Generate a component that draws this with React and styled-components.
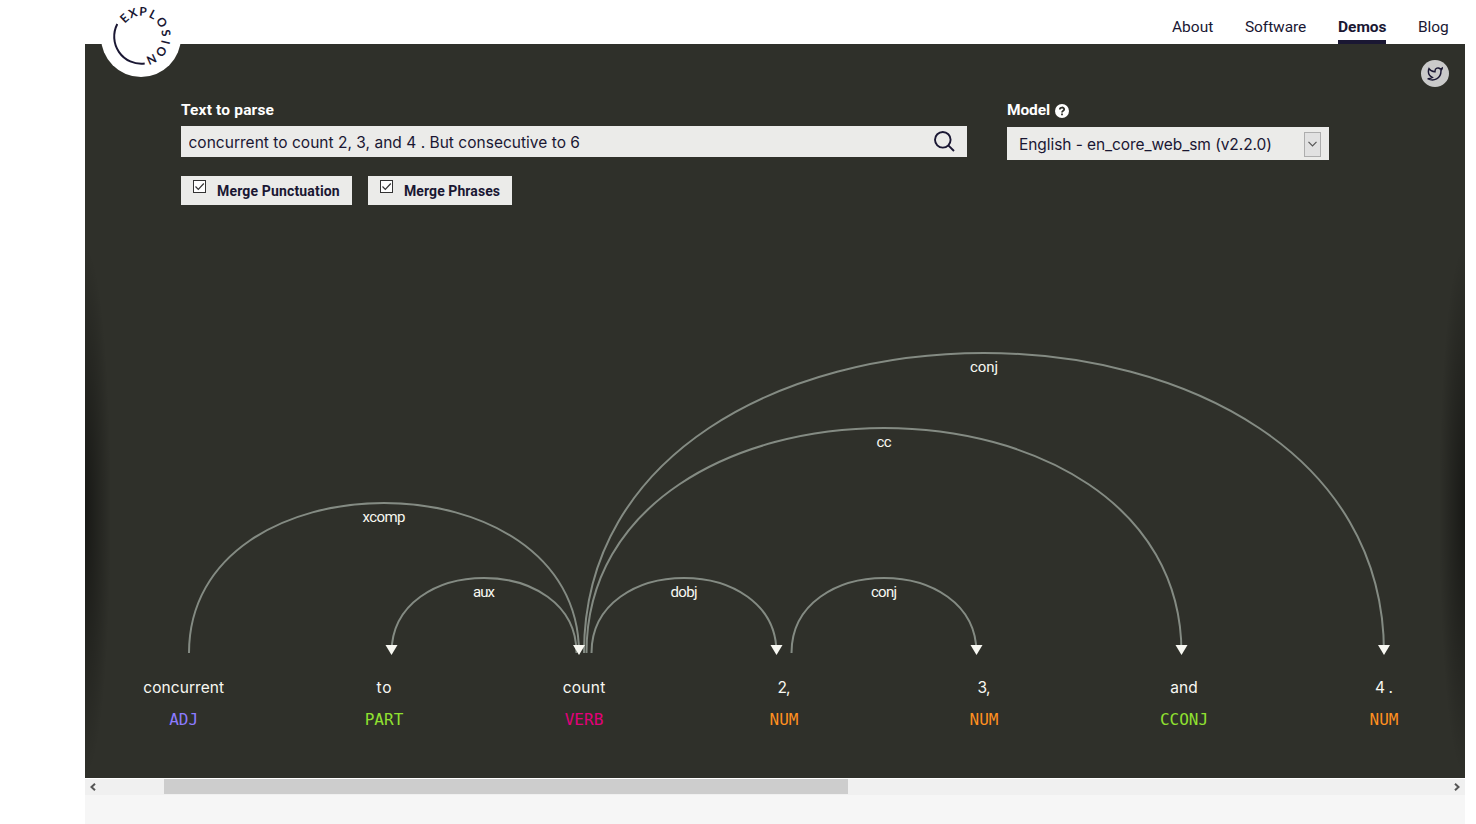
import { useState } from 'react'
import styled, { createGlobalStyle } from 'styled-components'

const GlobalStyle = createGlobalStyle`
	* {
		box-sizing: border-box;
	}
	body {
		margin: 0;
		background: #fff;
		color: #1a1733;
		font-family: Roboto, 'Liberation Sans', sans-serif;
		overflow: hidden;
	}
`

const Page = styled.div`
	width: 1380px;
	height: 824px;
	margin-left: 85px;
	background: #f6f6f6;
`

const Header = styled.header`
	position: relative;
	z-index: 1;
	display: flex;
	justify-content: flex-end;
	height: 44px;
	padding-right: 16px;
	background: #fff;
`

const Logo = styled.a`
	position: absolute;
	left: 16px;
	top: -3px;
	width: 80px;
	height: 80px;
	border-radius: 50%;
	background: #fff;
`

const Nav = styled.nav`
	display: flex;
	gap: 32px;
`

const NavLink = styled.a`
	width: ${p => p.$width}px;
	padding-top: 17px;
	font-size: 15.5px;
	line-height: 21px;
	white-space: nowrap;
	letter-spacing: ${p => p.$spacing || 0}px;
	font-weight: ${p => (p.$active ? 700 : 400)};
	border-bottom: ${p => (p.$active ? '4px solid #1a1733' : '0')};
`

const Stage = styled.main`
	position: relative;
	height: 734px;
	background: #2f302a;
`

const Twitter = styled.a`
	position: absolute;
	right: 16px;
	top: 16px;
	display: flex;
	align-items: center;
	justify-content: center;
	width: 28px;
	height: 27px;
	border-radius: 50%;
	background: #cacaca;
`

const Controls = styled.section`
	display: flex;
	gap: 40px;
	height: 200px;
	padding: 56px 0 0 96px;
`

const Field = styled.div`
	width: ${p => p.$width}px;
`

const Label = styled.label`
	display: flex;
	align-items: center;
	gap: 5px;
	height: 20px;
	color: #fff;
	font-size: 15.5px;
	font-weight: 700;
	letter-spacing: ${p => p.$spacing || 0}px;

	svg {
		margin-top: 2px;
	}
`

const SearchBox = styled.div`
	display: flex;
	align-items: center;
	justify-content: space-between;
	height: 31px;
	margin-top: 6px;
	padding: 0 12px 0 7.5px;
	background: #ebebe9;

	svg {
		margin-top: -1px;
	}
`

const Input = styled.input`
	flex: 1;
	padding: 2px 0 0;
	border: 0;
	outline: 0;
	background: transparent;
	color: #1a1733;
	font: 15.5px Inter, sans-serif;
	letter-spacing: 0.02px;
`

const Select = styled.div`
	display: flex;
	align-items: center;
	justify-content: space-between;
	height: 33px;
	margin-top: 7px;
	padding: 1px 8px 0 12px;
	background: #ebebe9;
	font: 15.5px Inter, sans-serif;
	letter-spacing: -0.07px;
	white-space: nowrap;
`

const SelectButton = styled.span`
	display: flex;
	align-items: center;
	justify-content: center;
	width: 17px;
	height: 25px;
	border: 1px solid #adadad;
	background: #e1e1e1;
`

const Options = styled.div`
	display: flex;
	gap: 16px;
	margin-top: 19px;
`

const Option = styled.label`
	display: flex;
	gap: 11px;
	width: ${p => p.$width}px;
	height: 29px;
	padding: 4px 0 0 12px;
	background: #ebebe9;
	font-size: 14px;
	font-weight: 700;
	line-height: 22px;
	letter-spacing: ${p => p.$spacing}px;
	white-space: nowrap;
`

const CheckBox = styled.span`
	display: flex;
	width: 13px;
	height: 13px;
	border: 1px solid #333;
	background: #fff;
`

const Scroller = styled.div`
	height: 534px;
	background:
		radial-gradient(farthest-side at 0 50%, rgba(0, 0, 0, 0.5), transparent) 0 0 / 26px 100% no-repeat,
		radial-gradient(farthest-side at 100% 50%, rgba(0, 0, 0, 0.5), transparent) 100% 0 / 26px 100% no-repeat;
`

const Scrollbar = styled.div`
	display: flex;
	align-items: center;
	justify-content: space-between;
	height: 17px;
	padding: 0 5px 1px;
	border-top: 1px solid #fff;
	background: #f0f0f0;
`

const Thumb = styled.div`
	width: 684px;
	height: 15px;
	margin: 0 auto 0 68px;
	background: #cdcdcd;
`

const words = [
	{ text: 'concurrent', tag: 'ADJ', x: 98.7, color: '#8c7bff', width: 81 },
	{ text: 'to', tag: 'PART', x: 299, color: '#90e030', width: 15 },
	{ text: 'count', tag: 'VERB', x: 499, color: '#e2007a', width: 42.5 },
	{ text: '2,', tag: 'NUM', x: 699, color: '#ff8f1f', width: 13 },
	{ text: '3,', tag: 'NUM', x: 899, color: '#ff8f1f', width: 13 },
	{ text: 'and', tag: 'CCONJ', x: 1099, color: '#90e030', width: 27.5 },
	{ text: '4 .', tag: 'NUM', x: 1299, color: '#ff8f1f', width: 18 },
]

const arcs = [
	{ label: 'xcomp', from: 104, to: 494, level: 2, arrow: 494, width: 43 },
	{ label: 'aux', from: 306.5, to: 491.5, level: 1, arrow: 306.5, width: 22 },
	{ label: 'dobj', from: 506.5, to: 691.5, level: 1, arrow: 691.5, width: 27 },
	{ label: 'conj', from: 706.5, to: 891.5, level: 1, arrow: 891.5, width: 26 },
	{ label: 'cc', from: 501.5, to: 1096.5, level: 3, arrow: 1096.5, width: 15 },
	{ label: 'conj', from: 499, to: 1299, level: 4, arrow: 1299, width: 28 },
]

// distance from the top of the tree to the feet of the arcs
const BASE = 409

function Tree() {
	return (
		<svg width='1380' height='534' fontFamily='Inter, sans-serif' textAnchor='middle'>
			{arcs.map((arc, i) => {
				const top = BASE - arc.level * 100
				return (
					<path
						key={i}
						d={`M${arc.from},${BASE} C${arc.from},${top} ${arc.to},${top} ${arc.to},${BASE}`}
						fill='none'
						stroke='#848b83'
						strokeWidth='2'
					/>
				)
			})}
			{arcs.map((arc, i) => (
				<g key={i} fill='#f8f8f2'>
					<path d={`M${arc.arrow},${BASE + 2} l-6,-10 h12 z`} />
					<text
						x={Math.round((arc.from + arc.to) / 200) * 100 - 1}
						y={BASE - arc.level * 75 + 19}
						textLength={arc.width}
						fontFamily='Roboto, sans-serif'
						fontSize='15'
					>
						{arc.label}
					</text>
				</g>
			))}
			{words.map(word => (
				<g key={word.x}>
					<text x={word.x} y='449' textLength={word.width} fontSize='15.5' fill='#f8f8f2'>
						{word.text}
					</text>
					<text x={word.x} y='481' fontFamily='DejaVu Sans Mono, monospace' fontSize='16' fill={word.color}>
						{word.tag}
					</text>
				</g>
			))}
		</svg>
	)
}

const letters = [
	['E', -43],
	['X', -20],
	['P', 4],
	['L', 28],
	['O', 55],
	['S', 82],
	['I', 103],
	['O', 127],
	['N', 156],
]

function LogoMark() {
	return (
		<svg width='80' height='80' viewBox='0 0 80 80' fill='#1a1733'>
			<path d='M16.3,27 A27.2,27.2 0 0 0 43.7,66.6' fill='none' stroke='#1a1733' strokeWidth='2' />
			{letters.map(([letter, angle], i) => (
				<text
					key={i}
					x='40.3'
					y='18.8'
					fontSize='12'
					fontWeight='700'
					fontFamily='Lato, sans-serif'
					textAnchor='middle'
					transform={`rotate(${angle} 40.3 39.5)`}
				>
					{letter}
				</text>
			))}
		</svg>
	)
}

function Check({ children, width, spacing }) {
	const [checked, setChecked] = useState(true)
	return (
		<Option $width={width} $spacing={spacing} onClick={() => setChecked(!checked)}>
			<CheckBox>
				{checked && (
					<svg width='11' height='11' fill='none' stroke='#333' strokeWidth='1.2'>
						<path d='M1.5,5.5 L4.3,8.3 L9.8,2.5' />
					</svg>
				)}
			</CheckBox>
			<span>{children}</span>
		</Option>
	)
}

export default function App() {
	const [text, setText] = useState('concurrent to count 2, 3, and 4 . But consecutive to 6')
	return (
		<>
			<GlobalStyle />
			<Page>
				<Header>
					<Logo>
						<LogoMark />
					</Logo>
					<Nav>
						<NavLink $width={41}>About</NavLink>
						<NavLink $width={61} $spacing={-0.1}>
							Software
						</NavLink>
						<NavLink $width={48} $active>
							Demos
						</NavLink>
						<NavLink $width={31} $spacing={-0.1}>
							Blog
						</NavLink>
					</Nav>
				</Header>
				<Stage>
					<Twitter>
						<svg width='16' height='16' viewBox='0 0 24 24' fill='none' stroke='#1a1733' strokeWidth='2.2'>
							<path d='M23 3a10.9 10.9 0 0 1-3.14 1.53 4.48 4.48 0 0 0-7.86 3v1A10.66 10.66 0 0 1 3 4s-4 9 5 13a11.64 11.64 0 0 1-7 2c9 5 20 0 20-11.5a4.5 4.5 0 0 0-.08-.83A7.72 7.72 0 0 0 23 3z' />
						</svg>
					</Twitter>
					<Controls>
						<Field $width={786}>
							<Label $spacing={0.17}>Text to parse</Label>
							<SearchBox>
								<Input value={text} onChange={ev => setText(ev.target.value)} />
								<svg width='21' height='21' fill='none' stroke='#1a1733' strokeWidth='1.9'>
									<circle cx='8.8' cy='8.8' r='7.8' />
									<path d='M14.3,14.3 L20,20' />
								</svg>
							</SearchBox>
							<Options>
								<Check width={171} spacing={0.16}>
									Merge Punctuation
								</Check>
								<Check width={144} spacing={0.08}>
									Merge Phrases
								</Check>
							</Options>
						</Field>
						<Field $width={322}>
							<Label $spacing={-0.1}>
								Model
								<svg width='14' height='14'>
									<circle cx='7' cy='7' r='7' fill='#fff' />
									<path
										d='M4.8,5.5 C4.8,2.9 9.2,2.9 9.2,5.3 C9.2,6.8 7,6.6 7,8.4 M7,9.4 V11.2'
										fill='none'
										stroke='#2f302a'
										strokeWidth='1.8'
									/>
								</svg>
							</Label>
							<Select>
								English - en_core_web_sm (v2.2.0)
								<SelectButton>
									<svg width='9' height='6' fill='none' stroke='#555' strokeWidth='1.2'>
										<path d='M0.5,0.8 L4.5,4.8 L8.5,0.8' />
									</svg>
								</SelectButton>
							</Select>
						</Field>
					</Controls>
					<Scroller>
						<Tree />
					</Scroller>
				</Stage>
				<Scrollbar>
					<svg width='6' height='8' fill='none' stroke='#555' strokeWidth='2'>
						<path d='M5,0.8 L1.5,4 L5,7.2' />
					</svg>
					<Thumb />
					<svg width='6' height='8' fill='none' stroke='#555' strokeWidth='2'>
						<path d='M1,0.8 L4.5,4 L1,7.2' />
					</svg>
				</Scrollbar>
			</Page>
		</>
	)
}
